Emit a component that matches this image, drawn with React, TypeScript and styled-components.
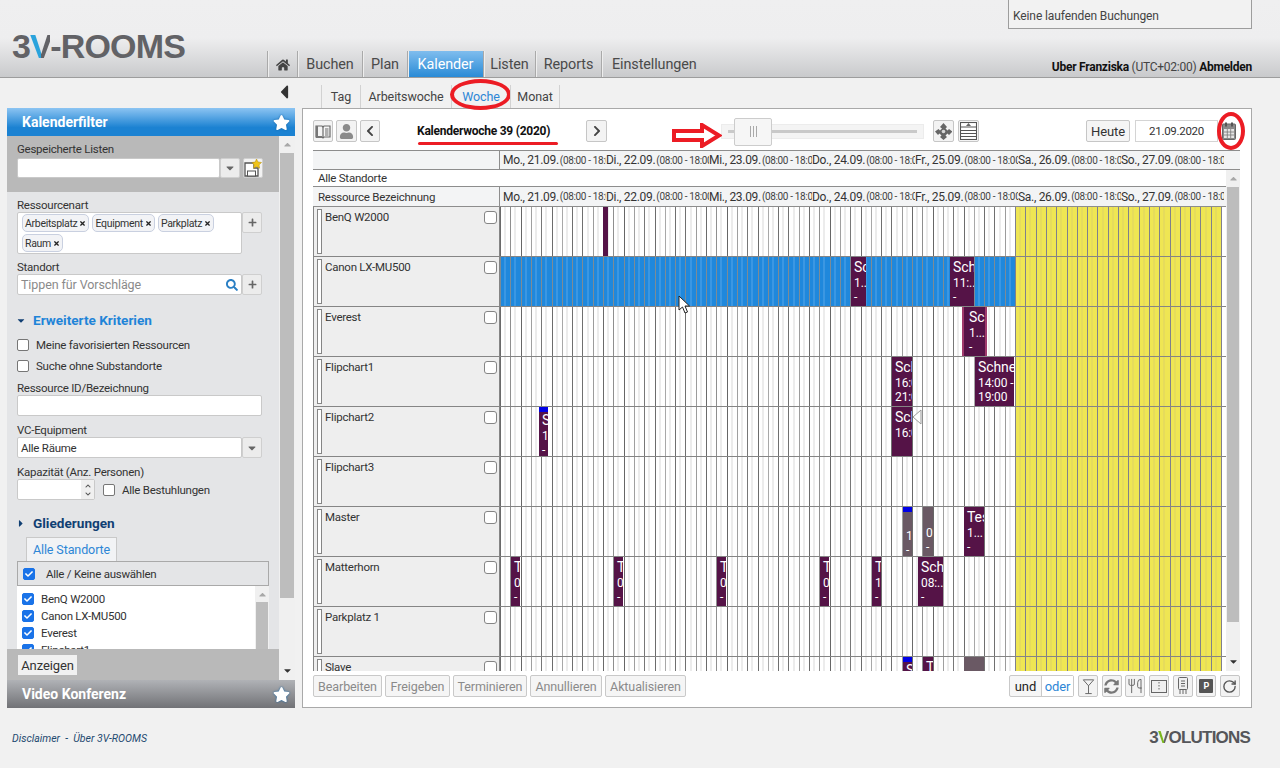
import { ReactNode } from 'react';
import styled, { createGlobalStyle } from 'styled-components';
import { FaHome, FaStar, FaSearch, FaCheck, FaPlus, FaSyncAlt, FaCaretDown, FaCaretRight, FaCaretUp, FaCaretLeft, FaChevronLeft, FaChevronRight, FaChevronUp, FaChevronDown, FaUser, FaTimes } from 'react-icons/fa';
import { Martini, Utensils, RotateCw } from 'lucide-react';

const UI_FONT = `Roboto, "Open Sans", "Liberation Sans", sans-serif`;

type Tone = 'free' | 'selected' | 'weekend';

const TONES: Record<Tone, { base: string; stripe: string; lines: string[] }> = {
  free: {
    base: '#ffffff',
    stripe: '#ececec',
    lines: ['#6a6a6a', '#8f8f8f', '#666666', '#a0a0a0', '#777777', '#6c6c6c', '#a8a8a8', '#6f6f6f', '#707070', '#9c9c9c'],
  },
  selected: {
    base: '#1f88dc',
    stripe: '#3b97e2',
    lines: Array(10).fill('#7d8b94'),
  },
  weekend: {
    base: '#efe653',
    stripe: '#e6dc5c',
    lines: Array(10).fill('#80808c'),
  },
};

const dayGradient = (tone: Tone) => {
  const { base, stripe, lines } = TONES[tone];
  const stops: string[] = [];
  for (let i = 0; i < 10; i++) {
    const x = Math.round(i * 10.3);
    const s = Math.round((i + 0.5) * 10.3) - 1;
    stops.push(`${lines[i]} ${x}px ${x + 1}px`, `${base} ${x + 1}px ${s}px`, `${stripe} ${s}px ${s + 2}px`);
    stops.push(`${base} ${s + 2}px ${Math.round((i + 1) * 10.3)}px`);
  }
  return `linear-gradient(to right, ${stops.join(', ')})`;
};

const GlobalStyle = createGlobalStyle`
  html, body { margin: 0; padding: 0; background: #f1f1f1; overflow: hidden; }
  #root { width: 1280px; height: 768px; }
  * { box-sizing: border-box; }
`;

const Page = styled.div`
  width: 1280px;
  height: 768px;
  display: flex;
  flex-direction: column;
  font-family: ${UI_FONT};
  font-size: 11.5px;
  color: #333;
  letter-spacing: -0.25px;
`;

const Header = styled.header`
  position: relative;
  height: 78px;
  flex: none;
  display: flex;
  align-items: flex-end;
  padding-right: 28px;
  background: linear-gradient(to bottom, #efeff0 0, #eeeeef 38px, #c9cacc 77px);
  border-bottom: 1px solid #9d9d9d;
`;

const Brand = styled.div`
  width: 267px;
  height: 45px;
  flex: none;
  padding-left: 12px;
  font-family: "Liberation Sans", sans-serif;
  font-weight: 700;
  font-size: 34px;
  line-height: 29px;
  letter-spacing: -0.8px;
  color: #626266;
`;

const SplitV = styled.span<{ $accent: string }>`
  background: linear-gradient(to right, ${(p) => p.$accent} 56%, #626266 56%);
  -webkit-background-clip: text;
  background-clip: text;
  color: transparent;
`;

const Nav = styled.nav`
  display: flex;
  height: 26px;
`;

const NavItem = styled.div<{ $width: number; $active?: boolean }>`
  width: ${(p) => p.$width}px;
  display: flex;
  align-items: center;
  justify-content: center;
  padding-top: 1px;
  font-size: 14.4px;
  letter-spacing: -0.1px;
  color: ${(p) => (p.$active ? '#fff' : '#4a4a4a')};
  border-left: 1px solid #a9a9a9;
  box-shadow: inset 1px 0 0 #eeeeee;
  background: ${(p) => (p.$active ? 'linear-gradient(to bottom, #7fbdee, #2a8bd6)' : 'transparent')};
  &:last-child { justify-content: flex-start; padding-left: 10px; }
`;

const UserInfo = styled.div`
  margin-left: auto;
  padding-bottom: 3px;
  font-size: 12px;
  color: #444;
  b { color: #111; font-weight: 700; }
`;

const RunningBox = styled.div`
  position: absolute;
  top: 0;
  right: 28px;
  width: 244px;
  height: 29px;
  padding: 9px 4px 0;
  background: #f2f2f2;
  border: 1px solid #9d9d9d;
  border-top: none;
  font-size: 12px;
  letter-spacing: -0.1px;
  color: #444;
`;

const Workspace = styled.main`
  height: 630px;
  flex: none;
  display: flex;
  padding: 0 28px 0 7px;
`;

const SideColumn = styled.aside`
  width: 288px;
  flex: none;
  display: flex;
  flex-direction: column;
`;

const CollapseRow = styled.div`
  height: 30px;
  flex: none;
  display: flex;
  justify-content: flex-end;
  align-items: center;
  padding: 0 0 2px 0;
  color: #333;
  font-size: 22px;
`;

const SidePanel = styled.section`
  flex: 1;
  min-height: 0;
  display: flex;
  flex-direction: column;
  background: #eeeeee;
`;

const PanelHead = styled.div<{ $muted?: boolean }>`
  height: 28px;
  flex: none;
  display: flex;
  align-items: center;
  justify-content: space-between;
  padding: 0 5px 0 15px;
  font-size: 14px;
  font-weight: 700;
  color: #fff;
  letter-spacing: 0;
  background: ${(p) =>
    p.$muted ? 'linear-gradient(to bottom, #b0b2b6, #717276)' : 'linear-gradient(to bottom, #8cc4f2, #1b82d2 70%)'};
`;

const StarMark = styled.span`
  display: flex;
  font-size: 17px;
  color: #fff;
  filter: drop-shadow(0 0 1px #1565a8);
`;

const PanelBody = styled.div`
  flex: 1;
  min-height: 0;
  display: flex;
`;

const PanelMain = styled.div`
  width: 272px;
  flex: none;
  display: flex;
  flex-direction: column;
`;

const SavedSection = styled.div`
  height: 56px;
  flex: none;
  padding: 6px 10px 0;
  background: #b9b9b9;
`;

const FilterArea = styled.div`
  flex: 1;
  min-height: 0;
  overflow: hidden;
  padding: 6px 17px 0 10px;
  background: #e4e5e7;
`;

const ActionBar = styled.div`
  height: 31px;
  flex: none;
  padding: 6px 11px;
  background: #b9b9b9;
`;

const ShowButton = styled.div`
  width: 59px;
  height: 20px;
  background: #f1f1f1;
  display: flex;
  align-items: center;
  justify-content: center;
  font-size: 13px;
  letter-spacing: -0.1px;
`;

const Scroll = styled.div<{ $width?: number }>`
  width: ${(p) => p.$width ?? 16}px;
  flex: none;
  display: flex;
  flex-direction: column;
  background: #f0f0f0;
`;

const ScrollEnd = styled.div<{ $height: number; $dark?: boolean }>`
  height: ${(p) => p.$height}px;
  flex: none;
  display: flex;
  align-items: center;
  justify-content: center;
  color: ${(p) => (p.$dark ? '#333' : '#a8a8a8')};
  font-size: 11px;
`;

const ScrollThumb = styled.div<{ $height: number }>`
  height: ${(p) => p.$height}px;
  flex: none;
  margin: 0 1px;
  background: #bdbdbd;
`;

const ScrollRest = styled.div`
  flex: 1;
`;

const FieldLabel = styled.div<{ $top?: number }>`
  height: 14px;
  line-height: 14px;
  margin-top: ${(p) => p.$top ?? 0}px;
  color: #333;
`;

const FieldRow = styled.div<{ $top?: number }>`
  display: flex;
  margin-top: ${(p) => p.$top ?? 0}px;
`;

const TextBox = styled.div<{ $height?: number; $width?: number }>`
  height: ${(p) => p.$height ?? 21}px;
  width: ${(p) => (p.$width ? `${p.$width}px` : 'auto')};
  flex: ${(p) => (p.$width ? 'none' : '1')};
  display: flex;
  align-items: center;
  justify-content: space-between;
  padding: 0 3px;
  background: #fff;
  border: 1px solid #c9c9c9;
  border-radius: 2px;
  color: #333;
`;

const Hint = styled.span`
  color: #8a8a8a;
  font-size: 12.5px;
  letter-spacing: -0.1px;
`;

const SideButton = styled.div<{ $left?: number; $light?: boolean; $height?: number }>`
  width: 20px;
  height: ${(p) => p.$height ?? 21}px;
  margin-left: ${(p) => p.$left ?? 0}px;
  flex: none;
  display: flex;
  align-items: center;
  justify-content: center;
  background: ${(p) => (p.$light ? '#f2f2f2' : '#ececec')};
  border: 1px solid #cfcfcf;
  border-radius: 2px;
  color: #666;
  font-size: 9px;
`;

const ChipBox = styled.div`
  width: 225px;
  height: 42px;
  flex: none;
  display: flex;
  flex-wrap: wrap;
  align-content: flex-start;
  gap: 2px 3px;
  padding: 1px 4px;
  background: #fff;
  border: 1px solid #c9c9c9;
  border-radius: 2px;
`;

const Chip = styled.span`
  height: 18px;
  display: inline-flex;
  align-items: center;
  gap: 2px;
  padding: 0 2px;
  font-size: 10.5px;
  letter-spacing: -0.3px;
  background: #f2f3f6;
  border: 1px solid #c9d0e0;
  border-radius: 5px;
  svg { font-size: 7px; color: #222; }
`;

const SectionTitle = styled.div<{ $dark?: boolean; $top: number }>`
  display: flex;
  align-items: center;
  gap: 8px;
  height: 16px;
  margin-top: ${(p) => p.$top}px;
  font-size: 13.6px;
  font-weight: 700;
  letter-spacing: 0;
  color: ${(p) => (p.$dark ? '#103f73' : '#1f84d8')};
  svg { font-size: 11px; width: 8px; }
`;

const CheckLine = styled.div<{ $top: number }>`
  display: flex;
  align-items: center;
  gap: 7px;
  height: 14px;
  margin-top: ${(p) => p.$top}px;
`;

const Box = styled.span<{ $checked?: boolean }>`
  width: 12px;
  height: 12px;
  flex: none;
  display: inline-flex;
  align-items: center;
  justify-content: center;
  border-radius: 2px;
  border: 1px solid ${(p) => (p.$checked ? '#1a73e8' : '#767676')};
  background: ${(p) => (p.$checked ? '#1a73e8' : '#fff')};
  color: #fff;
  font-size: 8px;
`;

const RowCheck = styled(Box)`
  width: 13px;
  height: 13px;
  margin-top: 2px;
  border-radius: 3px;
  border-color: #858585;
`;

const Spinner = styled.div`
  width: 78px;
  height: 21px;
  flex: none;
  display: flex;
  justify-content: flex-end;
  background: #fff;
  border: 1px solid #c9c9c9;
  border-radius: 2px;
`;

const SpinnerArrows = styled.div`
  width: 13px;
  display: flex;
  flex-direction: column;
  align-items: center;
  justify-content: center;
  gap: 2px;
  background: #f0f0f0;
  color: #555;
  font-size: 6px;
`;

const KapazitaetRow = styled.div`
  display: flex;
  align-items: center;
  gap: 8px;
`;

const MiniTab = styled.div`
  width: 91px;
  height: 24px;
  margin: 6px 0 0 9px;
  display: flex;
  align-items: center;
  justify-content: center;
  background: #f2f3f5;
  border: 1px solid #c9c9c9;
  border-bottom: none;
  color: #2d86d6;
  font-size: 12.5px;
  letter-spacing: -0.1px;
`;

const TreeHead = styled.div`
  width: 252px;
  height: 25px;
  display: flex;
  align-items: center;
  gap: 11px;
  padding-left: 5px;
  border: 1px solid #a9a9a9;
  background: #e4e5e7;
`;

const TreeBody = styled.div`
  width: 252px;
  height: 70px;
  display: flex;
  background: #fff;
`;

const TreeList = styled.div`
  flex: 1;
  padding: 6px 5px;
  display: flex;
  flex-direction: column;
  gap: 3px;
`;

const TreeItem = styled.div`
  height: 14px;
  display: flex;
  align-items: center;
  gap: 7px;
`;

const MainColumn = styled.section`
  width: 950px;
  margin-left: 7px;
  flex: none;
  display: flex;
  flex-direction: column;
`;

const ViewTabs = styled.div`
  height: 30px;
  flex: none;
  display: flex;
  align-items: flex-end;
  padding-left: 19px;
`;

const ViewTab = styled.div<{ $width: number; $active?: boolean }>`
  position: relative;
  width: ${(p) => p.$width}px;
  height: 23px;
  display: flex;
  align-items: center;
  justify-content: center;
  font-size: 12.5px;
  letter-spacing: -0.1px;
  color: ${(p) => (p.$active ? '#2d86d6' : '#444')};
  border-left: 1px solid #d2d2d2;
  &:last-child { border-right: 1px solid #d2d2d2; }
`;

const RedEllipse = styled.span<{ $w: number; $h: number; $left: number; $top: number }>`
  position: absolute;
  left: ${(p) => p.$left}px;
  top: ${(p) => p.$top}px;
  width: ${(p) => p.$w}px;
  height: ${(p) => p.$h}px;
  border: 4px solid #ec1c24;
  border-radius: 50%;
`;

const Card = styled.div`
  flex: 1;
  min-height: 0;
  display: flex;
  flex-direction: column;
  padding: 0 11px 0 10px;
  background: #fff;
  border: 1px solid #a9a9a9;
`;

const Toolbar = styled.div`
  position: relative;
  height: 41px;
  flex: none;
  display: flex;
  align-items: center;
  padding-top: 3px;
`;

const IconButton = styled.div<{ $width?: number; $disabled?: boolean; $left?: number }>`
  width: ${(p) => p.$width ?? 21}px;
  height: 22px;
  margin-left: ${(p) => p.$left ?? 0}px;
  flex: none;
  display: flex;
  align-items: center;
  justify-content: center;
  background: #f3f3f3;
  border: 1px solid #c6c6c6;
  border-radius: 2px;
  color: ${(p) => (p.$disabled ? '#8b8b8b' : '#444')};
  font-size: 12px;
`;

const WeekTitle = styled.div`
  position: relative;
  width: 206px;
  flex: none;
  padding-left: 37px;
  font-size: 12px;
  font-weight: 700;
  color: #111;
`;

const WeekUnderline = styled.span`
  position: absolute;
  left: 38px;
  top: 18px;
  width: 140px;
  height: 3px;
  border-radius: 2px;
  background: #ec1c24;
`;

const SliderWrap = styled.div`
  position: relative;
  width: 203px;
  height: 15px;
  flex: none;
  margin: 0 9px 0 114px;
  display: flex;
  align-items: center;
  padding: 0 6px;
  background: #f4f4f4;
  border: 1px solid #ececec;
`;

const SliderLine = styled.div`
  flex: 1;
  height: 3px;
  background: #c9c9c9;
`;

const SliderThumb = styled.div`
  position: absolute;
  left: 12px;
  top: -7px;
  width: 38px;
  height: 28px;
  background: #f6f6f6;
  border: 1px solid #cccccc;
  border-radius: 2px;
  display: flex;
  align-items: center;
  justify-content: center;
  gap: 2px;
  i { width: 1px; height: 11px; background: #a9a9a9; }
`;

const RedArrow = styled.svg`
  position: absolute;
  left: -50px;
  top: -2px;
`;

const TodayButton = styled.div`
  width: 44px;
  height: 22px;
  margin-left: auto;
  flex: none;
  display: flex;
  align-items: center;
  justify-content: center;
  background: #f5f5f5;
  border: 1px solid #c6c6c6;
  border-radius: 2px;
  font-size: 13px;
  letter-spacing: -0.1px;
`;

const DateBox = styled.div`
  width: 83px;
  height: 22px;
  margin-left: 5px;
  flex: none;
  display: flex;
  align-items: center;
  justify-content: center;
  border: 1px solid #d4d4d4;
  color: #333;
  font-size: 11.5px;
  letter-spacing: -0.3px;
`;

const CalendarSlot = styled.div`
  position: relative;
  width: 22px;
  height: 22px;
  flex: none;
  display: flex;
  align-items: center;
  justify-content: center;
`;

const GridHead = styled.div<{ $bar?: boolean }>`
  height: ${(p) => (p.$bar ? 20 : 21)}px;
  flex: none;
  display: flex;
  background: #f3f4f5;
  border-top: 1px solid #8d8d8d;
  border-bottom: 1px solid #8d8d8d;
`;

const HeadLabel = styled.div`
  width: 187px;
  flex: none;
  padding: 0 0 0 5px;
  display: flex;
  align-items: center;
  border-right: 1px solid #8d8d8d;
`;

const HeadDays = styled.div`
  display: flex;
  padding-left: 3px;
`;

const HeadDay = styled.div`
  width: 103px;
  flex: none;
  overflow: hidden;
  white-space: nowrap;
  display: flex;
  align-items: center;
  span { font-size: 12px; letter-spacing: -0.3px; margin-right: 1px; }
  small { font-size: 10px; letter-spacing: -0.35px; color: #444; }
`;

const GridViewport = styled.div`
  height: 501px;
  flex: none;
  display: flex;
`;

const GridMain = styled.div`
  width: 913px;
  flex: none;
  overflow: hidden;
`;

const AllRow = styled.div`
  height: 16px;
  display: flex;
  align-items: center;
  padding-left: 5px;
`;

const ResourceRow = styled.div`
  height: 50px;
  display: flex;
  border-bottom: 1px solid #858585;
`;

const ResourceCell = styled.div`
  width: 187px;
  flex: none;
  display: flex;
  gap: 3px;
  padding: 2px 2px 2px 3px;
  background: #eeeeee;
  border-left: 1px solid #858585;
  border-right: 1px solid #858585;
`;

const DragHandle = styled.div`
  width: 5px;
  flex: none;
  background: #fff;
  border: 1px solid #858585;
`;

const ResourceName = styled.div`
  flex: 1;
  padding-top: 1px;
  line-height: 14px;
`;

const Track = styled.div`
  position: relative;
  width: 722px;
  flex: none;
  display: flex;
`;

const DayBand = styled.div<{ $tone: Tone; $days: number }>`
  width: ${(p) => p.$days * 103 + (p.$tone === 'weekend' ? 1 : 0)}px;
  flex: none;
  background-image: ${(p) => dayGradient(p.$tone)};
  background-size: 103px 100%;
`;

const Booking = styled.div<{ $kind?: 'grey' | 'soft'; $flag?: boolean }>`
  position: absolute;
  top: 0;
  bottom: 0;
  overflow: hidden;
  padding: ${(p) => (p.$flag ? 1 : 3)}px 0 0 ${(p) => (p.$kind === 'soft' ? 5 : 3)}px;
  background: ${(p) => (p.$kind === 'grey' ? '#6a5964' : '#551347')};
  border-left: ${(p) => (p.$kind === 'soft' ? '2px solid #a03a6c' : 'none')};
  border-right: ${(p) => (p.$kind === 'soft' ? '2px solid #a03a6c' : 'none')};
  border-top: ${(p) => (p.$flag ? '5px solid #0000e6' : 'none')};
  color: #fff;
  white-space: nowrap;
  font-size: 12px;
  letter-spacing: -0.1px;
  line-height: 14px;
  b { display: block; font-weight: 400; font-size: 14px; line-height: 15px; margin-bottom: 1px; }
  span { display: block; }
`;

const DragTip = styled.svg`
  position: absolute;
  left: 412px;
  top: 2px;
`;

const Pointer = styled.svg`
  position: absolute;
  left: 178px;
  top: 38px;
  z-index: 2;
`;

const BottomBar = styled.div`
  flex: 1;
  display: flex;
  align-items: flex-start;
  padding-top: 4px;
`;

const ActionButton = styled.div<{ $width: number }>`
  width: ${(p) => p.$width}px;
  height: 22px;
  margin-right: 3px;
  flex: none;
  display: flex;
  align-items: center;
  justify-content: center;
  color: #8a8a8a;
  font-size: 12.5px;
  letter-spacing: -0.1px;
  background: #f5f5f5;
  border: 1px solid #c9c9c9;
  border-radius: 2px;
`;

const ToggleGroup = styled.div`
  display: flex;
  width: 65px;
  height: 22px;
  margin-left: auto;
  flex: none;
  border: 1px solid #c9c9c9;
  border-radius: 2px;
  background: #f6f6f6;
  font-size: 13px;
  letter-spacing: -0.1px;
`;

const ToggleItem = styled.div<{ $active?: boolean }>`
  flex: 1;
  display: flex;
  align-items: center;
  justify-content: center;
  color: ${(p) => (p.$active ? '#2d86d6' : '#222')};
  background: ${(p) => (p.$active ? '#fff' : 'transparent')};
  border-left: ${(p) => (p.$active ? '1px solid #c9c9c9' : 'none')};
`;

const ToolIcons = styled.div`
  width: 162px;
  display: flex;
  justify-content: space-between;
  margin-left: 4px;
`;

const ParkSign = styled.span`
  width: 14px;
  height: 14px;
  display: flex;
  align-items: center;
  justify-content: center;
  background: #555;
  color: #fff;
  border-radius: 1px;
  font-size: 9px;
  font-weight: 700;
`;

const Footer = styled.footer`
  flex: 1;
  display: flex;
  align-items: center;
  justify-content: space-between;
  padding: 0 30px 0 12px;
`;

const FooterLinks = styled.div`
  font-size: 10.5px;
  font-style: italic;
  letter-spacing: 0;
  color: #1e4a70;
`;

const FooterBrand = styled.div`
  font-family: "Liberation Sans", sans-serif;
  font-weight: 700;
  font-size: 17px;
  letter-spacing: -0.8px;
  color: #55565a;
`;

const BookIcon = () => (
  <svg width="16" height="15" viewBox="0 0 16 15" fill="none" stroke="#6b6b6b" strokeWidth="1.2">
    <path d="M1 2h6l1 1 1-1h6v11H9l-1 1-1-1H1z" fill="#f4f4f4" />
    <path d="M8 3v10M10 5h3.5M10 7h3.5M10 9h3.5M10 11h3.5" />
    <path d="M2 2v11h5" strokeWidth="2" stroke="#777" />
  </svg>
);

const MoveIcon = () => (
  <svg width="17" height="17" viewBox="0 0 17 17" fill="#666">
    <path d="M8.500 0l3.500 4-1.500 1.500 2 2 1.500-1.500 3.500 2.500-3.500 3.500-1.500-1.500-2 2 1.500 1.500-3.500 3-3.500-3 1.500-1.500-2-2-1.500 1.500L0 8.500 3.500 6 5 7.500l2-2L5 4z" />
    <circle cx="8.500" cy="8.500" r="1.800" fill="#d8d8d8" />
  </svg>
);

const ListIcon = () => (
  <svg width="17" height="18" viewBox="0 0 17 18" fill="none" stroke="#555" strokeWidth="1.1">
    <rect x="0.5" y="0.5" width="16" height="17" fill="#fff" />
    <path d="M1 5h15M1 8.500h15M1 11.500h15M1 14.500h15" />
    <path d="M8.500 1l2.500 3H6z" fill="#666" stroke="none" />
  </svg>
);

const CalendarIcon = () => (
  <svg width="14" height="18" viewBox="0 0 14 18">
    <rect x="0.5" y="2" width="13" height="15.500" rx="1" fill="#8a8a8a" stroke="#666" />
    <rect x="2" y="7" width="10" height="9" fill="#e6e6e6" />
    <path d="M2 10h10M2 13h10M5.300 7v9M8.700 7v9" stroke="#777" strokeWidth="0.8" />
    <rect x="3" y="0.5" width="2" height="4" fill="#555" />
    <rect x="9" y="0.5" width="2" height="4" fill="#555" />
  </svg>
);

const SaveIcon = () => (
  <svg width="18" height="18" viewBox="0 0 18 18">
    <path d="M1 4h9v5H14v8H1z" fill="#fff" stroke="#555" strokeWidth="1.3" />
    <rect x="3.500" y="12" width="8" height="5" fill="#fff" stroke="#555" />
    <path d="M12.500 0l1.500 3 3.500.5-2.500 2.300.6 3.400-3.100-1.600-3 1.600.6-3.400L8 3.500l3.200-.5z" fill="#f0c419" stroke="#b58a00" strokeWidth="0.5" />
  </svg>
);

const PanelIcon = () => (
  <svg width="16" height="15" viewBox="0 0 16 15" fill="none" stroke="#666">
    <rect x="0.5" y="1.500" width="15" height="12" fill="#efefef" />
    <path d="M8 3v9" strokeDasharray="1.500 1.500" />
  </svg>
);

const DeviceIcon = () => (
  <svg width="12" height="18" viewBox="0 0 12 18" fill="none" stroke="#666">
    <rect x="1.500" y="0.500" width="9" height="12" rx="1" fill="#efefef" />
    <path d="M4 4h4M4 6.500h4M4 9h4M3 13v4M6 13v4M9 13v4" />
  </svg>
);

const tools: ReactNode[] = [
  <Martini key="m" size={17} strokeWidth={1.4} color="#6a6a6a" />,
  <FaSyncAlt key="s" size={15} color="#777" />,
  <Utensils key="u" size={16} strokeWidth={1.5} color="#6a6a6a" />,
  <PanelIcon key="p" />,
  <DeviceIcon key="d" />,
  <ParkSign key="k">P</ParkSign>,
  <RotateCw key="r" size={15} strokeWidth={2.2} color="#555" />,
];

const days = [
  'Mo., 21.09.',
  'Di., 22.09.',
  'Mi., 23.09.',
  'Do., 24.09.',
  'Fr., 25.09.',
  'Sa., 26.09.',
  'So., 27.09.',
];

type BookingData = { left: number; width: number; lines?: string[]; kind?: 'grey' | 'soft'; flag?: boolean };

const resources: { name: string; selected?: boolean; bookings: BookingData[] }[] = [
  { name: 'BenQ W2000', bookings: [{ left: 103, width: 5 }] },
  {
    name: 'Canon LX-MU500',
    selected: true,
    bookings: [
      { left: 351, width: 15, lines: ['Sc', '1...', '-', '. .'] },
      { left: 450, width: 24, lines: ['Sch', '11:...', '-', '. .'] },
    ],
  },
  { name: 'Everest', bookings: [{ left: 462, width: 25, kind: 'soft', lines: ['Scl', '1...', '-', '.'] }] },
  {
    name: 'Flipchart1',
    bookings: [
      { left: 392, width: 20, lines: ['Scl', '16:0', '21:0'] },
      { left: 475, width: 39, lines: ['Schne', '14:00 -', '19:00'] },
    ],
  },
  {
    name: 'Flipchart2',
    bookings: [
      { left: 39, width: 9, flag: true, lines: ['S', '1', '-'] },
      { left: 392, width: 20, lines: ['Scl', '16:0'] },
    ],
  },
  { name: 'Flipchart3', bookings: [] },
  {
    name: 'Master',
    bookings: [
      { left: 403, width: 9, kind: 'grey', flag: true, lines: ['', '1', '-'] },
      { left: 423, width: 10, kind: 'grey', lines: ['', '0', '-'] },
      { left: 464, width: 20, lines: ['Tes', '1...', '-', '.'] },
    ],
  },
  {
    name: 'Matterhorn',
    bookings: [
      { left: 11, width: 9, lines: ['T', '0', '-', '.'] },
      { left: 114, width: 9, lines: ['T', '0', '-', '.'] },
      { left: 217, width: 9, lines: ['T', '0', '-', '.'] },
      { left: 320, width: 9, lines: ['T', '0', '-', '.'] },
      { left: 372, width: 9, lines: ['T', '1', '-', '.'] },
      { left: 418, width: 25, lines: ['Sch', '08:...', '-', '. .'] },
    ],
  },
  { name: 'Parkplatz 1', bookings: [] },
  {
    name: 'Slave',
    bookings: [
      { left: 403, width: 9, flag: true, lines: ['S'] },
      { left: 423, width: 10, lines: ['T'] },
      { left: 464, width: 20, kind: 'grey' },
    ],
  },
];

const DayHeader = () => (
  <HeadDays>
    {days.map((d) => (
      <HeadDay key={d}>
        <span>{d}</span>
        <small>(08:00 - 18:00)</small>
      </HeadDay>
    ))}
  </HeadDays>
);

export default function App() {
  return (
    <Page>
      <GlobalStyle />
      <Header>
        <Brand>
          3<SplitV $accent="#2aa3dc">V</SplitV>-ROOMS
        </Brand>
        <Nav>
          <NavItem $width={30}><FaHome size={14} color="#444" /></NavItem>
          <NavItem $width={65}>Buchen</NavItem>
          <NavItem $width={45}>Plan</NavItem>
          <NavItem $width={76} $active>Kalender</NavItem>
          <NavItem $width={52}>Listen</NavItem>
          <NavItem $width={66}>Reports</NavItem>
          <NavItem $width={103}>Einstellungen</NavItem>
        </Nav>
        <UserInfo><b>Uber Franziska</b> (UTC+02:00) <b>Abmelden</b></UserInfo>
        <RunningBox>Keine laufenden Buchungen</RunningBox>
      </Header>

      <Workspace>
        <SideColumn>
          <CollapseRow><FaCaretLeft /></CollapseRow>
          <SidePanel>
            <PanelHead>
              Kalenderfilter
              <StarMark><FaStar /></StarMark>
            </PanelHead>
            <PanelBody>
              <PanelMain>
                <SavedSection>
                  <FieldLabel>Gespeicherte Listen</FieldLabel>
                  <FieldRow $top={2}>
                    <TextBox $width={203} $height={20} />
                    <SideButton $height={20}><FaCaretDown size={12} /></SideButton>
                    <SideButton $left={3} $light $height={20}><SaveIcon /></SideButton>
                  </FieldRow>
                </SavedSection>
                <FilterArea>
                  <FieldLabel>Ressourcenart</FieldLabel>
                  <FieldRow>
                    <ChipBox>
                      <Chip>Arbeitsplatz<FaTimes /></Chip>
                      <Chip>Equipment<FaTimes /></Chip>
                      <Chip>Parkplatz<FaTimes /></Chip>
                      <Chip>Raum<FaTimes /></Chip>
                    </ChipBox>
                    <SideButton><FaPlus /></SideButton>
                  </FieldRow>
                  <FieldLabel $top={6}>Standort</FieldLabel>
                  <FieldRow>
                    <TextBox>
                      <Hint>Tippen für Vorschläge</Hint>
                      <FaSearch size={12} color="#2a7fc4" />
                    </TextBox>
                    <SideButton><FaPlus /></SideButton>
                  </FieldRow>
                  <SectionTitle $top={17}><FaCaretDown color="#103f73" />Erweiterte Kriterien</SectionTitle>
                  <CheckLine $top={10}><Box />Meine favorisierten Ressourcen</CheckLine>
                  <CheckLine $top={7}><Box />Suche ohne Substandorte</CheckLine>
                  <FieldLabel $top={8}>Ressource ID/Bezeichnung</FieldLabel>
                  <TextBox />
                  <FieldLabel $top={7}>VC-Equipment</FieldLabel>
                  <FieldRow>
                    <TextBox>Alle Räume</TextBox>
                    <SideButton><FaCaretDown size={12} /></SideButton>
                  </FieldRow>
                  <FieldLabel $top={7}>Kapazität (Anz. Personen)</FieldLabel>
                  <KapazitaetRow>
                    <Spinner><SpinnerArrows><FaChevronUp /><FaChevronDown /></SpinnerArrows></Spinner>
                    <CheckLine $top={0}><Box />Alle Bestuhlungen</CheckLine>
                  </KapazitaetRow>
                  <SectionTitle $dark $top={15}><FaCaretRight color="#103f73" />Gliederungen</SectionTitle>
                  <MiniTab>Alle Standorte</MiniTab>
                  <TreeHead><Box $checked><FaCheck /></Box>Alle / Keine auswählen</TreeHead>
                  <TreeBody>
                    <TreeList>
                      {['BenQ W2000', 'Canon LX-MU500', 'Everest', 'Flipchart1'].map((n) => (
                        <TreeItem key={n}><Box $checked><FaCheck /></Box>{n}</TreeItem>
                      ))}
                    </TreeList>
                    <Scroll $width={14}>
                      <ScrollEnd $height={16}><FaCaretUp /></ScrollEnd>
                      <ScrollThumb $height={54} />
                    </Scroll>
                  </TreeBody>
                </FilterArea>
                <ActionBar><ShowButton>Anzeigen</ShowButton></ActionBar>
              </PanelMain>
              <Scroll>
                <ScrollEnd $height={17}><FaCaretUp /></ScrollEnd>
                <ScrollThumb $height={445} />
                <ScrollRest />
                <ScrollEnd $height={20} $dark><FaCaretDown /></ScrollEnd>
              </Scroll>
            </PanelBody>
            <PanelHead $muted>
              Video Konferenz
              <StarMark><FaStar /></StarMark>
            </PanelHead>
          </SidePanel>
        </SideColumn>

        <MainColumn>
          <ViewTabs>
            <ViewTab $width={39}>Tag</ViewTab>
            <ViewTab $width={91}>Arbeitswoche</ViewTab>
            <ViewTab $width={59} $active>
              Woche
              <RedEllipse $w={61} $h={31} $left={-2} $top={-6} />
            </ViewTab>
            <ViewTab $width={50}>Monat</ViewTab>
          </ViewTabs>
          <Card>
            <Toolbar>
              <IconButton $width={20}><BookIcon /></IconButton>
              <IconButton $width={21} $disabled $left={3}><FaUser size={15} /></IconButton>
              <IconButton $width={20} $left={3}><FaChevronLeft /></IconButton>
              <WeekTitle>
                Kalenderwoche 39 (2020)
                <WeekUnderline />
              </WeekTitle>
              <IconButton $width={21}><FaChevronRight /></IconButton>
              <SliderWrap>
                <RedArrow width="50" height="25" viewBox="0 0 50 25">
                  <path d="M2 8h28V2l17 10.500L30 23v-6H2z" fill="#fff" stroke="#ec1c24" strokeWidth="4" />
                </RedArrow>
                <SliderLine />
                <SliderThumb><i /><i /><i /></SliderThumb>
              </SliderWrap>
              <IconButton $width={21}><MoveIcon /></IconButton>
              <IconButton $width={21} $left={4}><ListIcon /></IconButton>
              <TodayButton>Heute</TodayButton>
              <DateBox>21.09.2020</DateBox>
              <CalendarSlot>
                <CalendarIcon />
                <RedEllipse $w={28} $h={38} $left={-1} $top={-8} />
              </CalendarSlot>
            </Toolbar>

            <GridHead $bar>
              <HeadLabel />
              <DayHeader />
            </GridHead>

            <GridViewport>
              <GridMain>
                <AllRow>Alle Standorte</AllRow>
                <GridHead>
                  <HeadLabel>Ressource Bezeichnung</HeadLabel>
                  <DayHeader />
                </GridHead>
                {resources.map((r) => (
                  <ResourceRow key={r.name}>
                    <ResourceCell>
                      <DragHandle />
                      <ResourceName>{r.name}</ResourceName>
                      <RowCheck />
                    </ResourceCell>
                    <Track>
                      <DayBand $tone={r.selected ? 'selected' : 'free'} $days={5} />
                      <DayBand $tone="weekend" $days={2} />
                      {r.bookings.map((b) => (
                        <Booking key={b.left} $kind={b.kind} $flag={b.flag} style={{ left: b.left, width: b.width }}>
                          {b.lines?.map((l, i) => (i === 0 ? <b key={i}>{l || '\u00a0'}</b> : <span key={i}>{l}</span>))}
                        </Booking>
                      ))}
                      {r.name === 'Flipchart2' && (
                        <DragTip width="10" height="16" viewBox="0 0 10 16">
                          <path d="M9 1v14L1 8z" fill="#fff" stroke="#999" />
                        </DragTip>
                      )}
                      {r.selected && (
                        <Pointer width="12" height="19" viewBox="0 0 12 19">
                          <path d="M1 1v14l3.500-3 2.500 6 2.500-1-2.500-6h4.500z" fill="#fff" stroke="#222" />
                        </Pointer>
                      )}
                    </Track>
                  </ResourceRow>
                ))}
              </GridMain>
              <Scroll $width={14}>
                <ScrollEnd $height={17}><FaCaretUp /></ScrollEnd>
                <ScrollThumb $height={435} />
                <ScrollRest />
                <ScrollEnd $height={20} $dark><FaCaretDown /></ScrollEnd>
              </Scroll>
            </GridViewport>

            <BottomBar>
              <ActionButton $width={69}>Bearbeiten</ActionButton>
              <ActionButton $width={65}>Freigeben</ActionButton>
              <ActionButton $width={74}>Terminieren</ActionButton>
              <ActionButton $width={72}>Annullieren</ActionButton>
              <ActionButton $width={81}>Aktualisieren</ActionButton>
              <ToggleGroup>
                <ToggleItem>und</ToggleItem>
                <ToggleItem $active>oder</ToggleItem>
              </ToggleGroup>
              <ToolIcons>
                {tools.map((icon, i) => (
                  <IconButton key={i} $width={20}>{icon}</IconButton>
                ))}
              </ToolIcons>
            </BottomBar>
          </Card>
        </MainColumn>
      </Workspace>

      <Footer>
        <FooterLinks>Disclaimer &nbsp;-&nbsp; Über 3V-ROOMS</FooterLinks>
        <FooterBrand>
          3<SplitV $accent="#7ab51d">V</SplitV>OLUTIONS
        </FooterBrand>
      </Footer>
    </Page>
  );
}
